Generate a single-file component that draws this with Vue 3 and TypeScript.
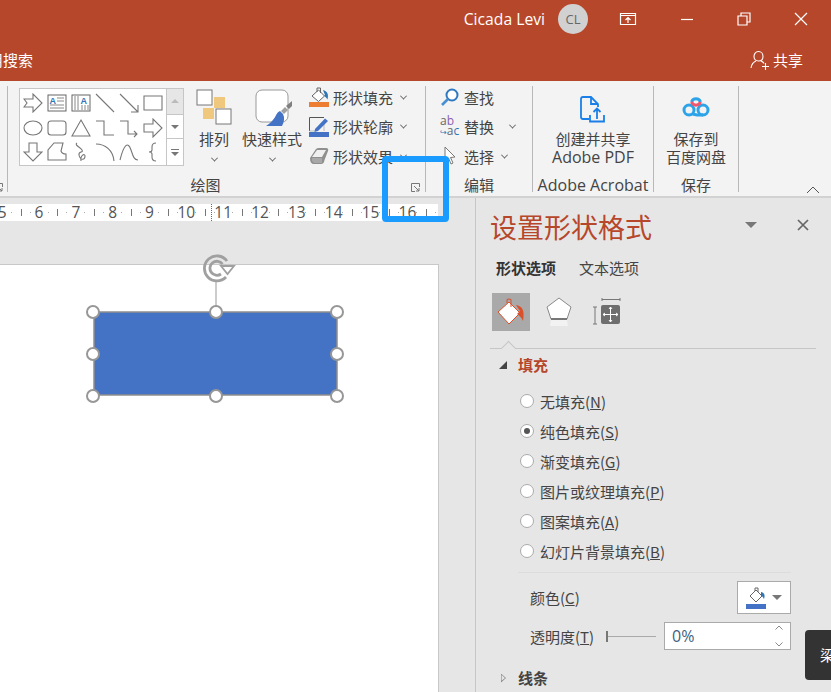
<script setup lang="ts">
const shapes: string[] = [
  'M1 6H10V1L19 10L10 19V14H1L4 10Z',
  '',
  '',
  'M1 1L19 19',
  'M1 1L19 19M19 12V19H12',
  'M1 3H19V17H1Z',
  'M1 10A9 7 0 1 0 19 10A9 7 0 1 0 1 10Z',
  'M4 3H16Q19 3 19 6V14Q19 17 16 17H4Q1 17 1 14V6Q1 3 4 3Z',
  'M10 2L19 18H1Z',
  'M1 3H9V17H19',
  'M1 3H9V16H18M15 13L18 16L15 19',
  'M1 6H10V1L19 10L10 19V14H1Z',
  'M6 1H14V10H19L10 19L1 10H6Z',
  'M1 18V8L7 1H16L14 9Q15 12 19 12V18Z',
  'M6 1C3 3 9 5 11 8C13 11 7 9 8 13C9 18 14 19 14 14C14 11 9 13 10 19',
  'M1 2C10 2 18 8 19 19',
  'M1 18C5 2 9 -1 12 8C14 14 15 18 19 18',
  'M13 1Q9 1 9 5V8Q9 10 6 10Q9 10 9 12V15Q9 19 13 19',
]

const fillOptions = [
  { label: '无填充', key: 'N', on: false },
  { label: '纯色填充', key: 'S', on: true },
  { label: '渐变填充', key: 'G', on: false },
  { label: '图片或纹理填充', key: 'P', on: false },
  { label: '图案填充', key: 'A', on: false },
  { label: '幻灯片背景填充', key: 'B', on: false },
]

const rulerMarks = ['5', '6', '7', '8', '9', '10', '11', '12', '13', '14', '15', '16', '']

const handles: [number, number][] = [
  [93, 312], [216, 312], [337, 312],
  [93, 354], [337, 354],
  [93, 396], [216, 396], [337, 396],
]
</script>

<template>
  <div class="app">
    <header class="titlebar">
      <span class="user">Cicada Levi</span>
      <span class="avatar">CL</span>
      <svg class="win ribbon-opts" width="18" height="14" viewBox="0 0 18 14">
        <path d="M1.5 1.5H16.5V12.5H1.5ZM1.5 3.5H16.5M9 11V6M6.5 8L9 5.5L11.5 8" fill="none" stroke="#fff" stroke-width="1.2" />
      </svg>
      <svg class="win minimize" width="14" height="14" viewBox="0 0 14 14">
        <path d="M1 7.5H13" stroke="#fff" stroke-width="1.2" />
      </svg>
      <svg class="win restore" width="14" height="14" viewBox="0 0 14 14">
        <path d="M1 4H10V13H1ZM4 4V1H13V10H10" fill="none" stroke="#fff" stroke-width="1.2" />
      </svg>
      <svg class="win close" width="14" height="14" viewBox="0 0 14 14">
        <path d="M1 1L13 13M13 1L1 13" stroke="#fff" stroke-width="1.2" />
      </svg>
    </header>

    <div class="tabbar">
      <span class="search">用搜索</span>
      <span class="share">
        <svg width="22" height="20" viewBox="0 0 22 20">
          <path d="M8.5 1.5C11.5 1.5 13 4 13 6.5C13 9 11.5 11 8.5 11C5.5 11 4 9 4 6.5C4 4 5.5 1.5 8.5 1.5ZM1 18C1.5 14.5 3.5 12 6 11M11 11C12.5 11.6 13.5 12.5 14 13.5M15.5 13V20M12 16.5H19" fill="none" stroke="#fff" stroke-width="1.1" />
        </svg>
        共享
      </span>
    </div>

    <section class="ribbon">
      <div class="group sliver">
        <svg class="launcher" width="9" height="9" viewBox="0 0 9 9">
          <path d="M8.5 4V.5H.5V8.5H4M3 3L8 8M8 5V8H5" fill="none" stroke="#777" />
        </svg>
      </div>

      <div class="group draw">
        <div class="group-body draw-body">
          <div class="gallery">
            <div class="gallery-grid">
              <span v-for="(d, i) in shapes" :key="i" class="cell">
                <svg v-if="i === 1" width="20" height="20" viewBox="0 0 20 20">
                  <rect x="1" y="2" width="18" height="16" fill="#fff" stroke="#666" />
                  <text x="2.5" y="10.5" class="mini-a">A</text>
                  <path d="M10 5H17M10 8H17M3 12H17M3 15H17" stroke="#888" />
                </svg>
                <svg v-else-if="i === 2" width="20" height="20" viewBox="0 0 20 20">
                  <rect x="1" y="2" width="18" height="16" fill="#fff" stroke="#666" />
                  <text x="9.5" y="11" class="mini-a">A</text>
                  <path d="M4 3V17M7 3V17M11 12V17M14 12V17M17 12V17" stroke="#888" />
                </svg>
                <svg v-else width="20" height="20" viewBox="0 0 20 20">
                  <path :d="d" fill="none" stroke="#777" stroke-width="1.1" />
                </svg>
              </span>
            </div>
            <div class="gallery-scroll">
              <span class="scroll-btn first"><i class="tri up"></i></span>
              <span class="scroll-btn"><i class="tri"></i></span>
              <span class="scroll-btn last"><i class="bar"></i><i class="tri"></i></span>
            </div>
          </div>

          <div class="big-btn arrange">
            <svg width="36" height="36" viewBox="0 0 36 36">
              <rect x="18" y="8" width="11" height="11" fill="#efc77d" />
              <rect x="7" y="19" width="11" height="11" fill="#efc77d" />
              <rect x="1" y="1" width="15" height="15" fill="#fff" stroke="#777" />
              <rect x="20" y="20" width="15" height="15" fill="#fff" stroke="#777" />
            </svg>
            <span class="big-label">排列</span>
            <i class="chev"></i>
          </div>

          <div class="big-btn quick">
            <svg class="quick-icon" width="38" height="38" viewBox="0 0 38 38">
              <rect x="1" y="1" width="32" height="32" rx="6" fill="#fff" stroke="#999" />
              <path d="M37 12L31 17L34 20L37 17Z" fill="#7f7f7f" />
              <path d="M30 18L26 22L29 25L33 21Z" fill="#a0a0a0" />
              <path d="M25 22C20 24 22 30 11 37H27C29 33 30 29 28 25Z" fill="#4472c4" />
            </svg>
            <span class="big-label">快速样式</span>
            <i class="chev"></i>
          </div>

          <div class="format-list">
            <div class="format-row">
              <svg width="20" height="20" viewBox="0 0 20 20">
                <path d="M3 9L9.500 3L15.500 9L9.500 14.500Z" fill="#fff" stroke="#666" />
                <path d="M8 5V1H11.500V6" fill="none" stroke="#666" />
                <path d="M14 3C18 4 20 7 18.500 12.500C17.500 10.500 16 9.500 15 9L16 8Z" fill="#2e75b6" />
                <rect y="15" width="20" height="5" fill="#ed7d31" />
              </svg>
              <span>形状填充</span><i class="chev"></i>
            </div>
            <div class="format-row">
              <svg width="20" height="20" viewBox="0 0 20 20">
                <path d="M.5 14V.5H15" fill="none" stroke="#555" />
                <path d="M.5 14H6M15 7V14" fill="none" stroke="#bbb" />
                <path d="M6 12L16 1.5L19 4L9 14L5.5 15Z" fill="#4472c4" />
                <rect y="15" width="20" height="5" fill="#4472c4" />
              </svg>
              <span>形状轮廓</span><i class="chev"></i>
            </div>
            <div class="format-row">
              <svg width="20" height="20" viewBox="0 0 20 20">
                <path d="M1 12L7 3Q8 2 10 2H17Q20 2 19 5L15.500 14Q15 18 12 18H5Q1 18 1 12Z" fill="#8f8f8f" />
                <path d="M3 11L8 4H17L13 11Z" fill="#efefef" />
                <path d="M3 15L3 12H13L13 17H5Z" fill="#a8a8a8" />
              </svg>
              <span>形状效果</span><i class="chev"></i>
            </div>
          </div>
        </div>
        <div class="group-label">绘图</div>
        <svg class="launcher" width="9" height="9" viewBox="0 0 9 9">
          <path d="M8.5 4V.5H.5V8.5H4M3 3L8 8M8 5V8H5" fill="none" stroke="#777" />
        </svg>
      </div>

      <div class="group edit">
        <div class="group-body edit-body">
          <div class="edit-row">
            <svg width="20" height="20" viewBox="0 0 20 20">
              <circle cx="12" cy="8" r="5.500" fill="#fff" stroke="#2f78bf" stroke-width="2" />
              <path d="M8 12L2 18" stroke="#4a90d0" stroke-width="2.600" />
            </svg>
            <span>查找</span>
          </div>
          <div class="edit-row">
            <span class="abac"><b>a<em>b</em></b><b><em class="hook">↪</em>a<em class="c">c</em></b></span>
            <span>替换</span><i class="chev wide"></i>
          </div>
          <div class="edit-row">
            <svg width="20" height="20" viewBox="0 0 20 20">
              <path d="M5 1V15L8.500 12L11 18L13 17L10.500 11.500L15 11Z" fill="#fff" stroke="#777" />
            </svg>
            <span>选择</span><i class="chev"></i>
          </div>
        </div>
        <div class="group-label">编辑</div>
      </div>

      <div class="group acrobat">
        <div class="group-body stacked">
          <svg class="stack-icon" width="26" height="28" viewBox="0 0 26 28">
            <path d="M9 23H3Q1 23 1 21V3Q1 1 3 1H11L18 8V11M11 1V8H18" fill="none" stroke="#1a7fe8" stroke-width="1.800" />
            <path d="M17 23V13M13.500 16L17 12.500L20.500 16M10 19V25.500H24V19" fill="none" stroke="#1a7fe8" stroke-width="1.800" />
          </svg>
          <span>创建并共享</span>
          <span>Adobe PDF</span>
        </div>
        <div class="group-label latin">Adobe Acrobat</div>
      </div>

      <div class="group baidu">
        <div class="group-body stacked">
          <svg class="stack-icon" width="28" height="28" viewBox="0 0 28 28">
            <circle cx="7" cy="14" r="5" fill="none" stroke="#2da3e8" stroke-width="3" />
            <circle cx="21" cy="14" r="5" fill="none" stroke="#2da3e8" stroke-width="3" />
            <path d="M10.500 18L15 19H21" fill="none" stroke="#2da3e8" stroke-width="3" />
            <path d="M9.500 6A4.800 4.800 0 0 1 18.500 6" fill="none" stroke="#2da3e8" stroke-width="3" />
            <path d="M9.500 6A4.800 4.800 0 0 0 18.500 6" fill="none" stroke="#f0566c" stroke-width="3" />
          </svg>
          <span>保存到</span>
          <span>百度网盘</span>
        </div>
        <div class="group-label">保存</div>
      </div>

      <svg class="collapse" width="14" height="8" viewBox="0 0 14 8">
        <path d="M1 7L7 1L13 7" fill="none" stroke="#555" />
      </svg>
    </section>

    <main class="main">
      <div class="canvas">
        <div class="ruler">
          <span v-for="(m, i) in rulerMarks" :key="i" class="mark">{{ m }}</span>
          <i class="ruler-cursor"></i>
        </div>
        <div class="slide">
          <svg class="selection" width="290" height="160" viewBox="70 250 290 160">
            <rect x="94" y="312" width="243" height="83" fill="#4472c4" stroke="#8e8e8e" stroke-width="1.500" />
            <path d="M216 281V306" stroke="#999" />
            <circle
              v-for="(h, i) in handles"
              :key="i"
              :cx="h[0]"
              :cy="h[1]"
              r="6"
              fill="#fff"
              stroke="#979797"
              stroke-width="2"
            />
            <path
              d="M227 261A12.500 12.500 0 1 0 226 277M222.500 264A7 7 0 1 0 221 274"
              fill="none"
              stroke="#a0a0a0"
              stroke-width="2.800"
            />
            <path d="M221 266H234L227.500 274Z" fill="#fff" stroke="#a0a0a0" stroke-width="1.800" />
          </svg>
        </div>
      </div>

      <aside class="panel">
        <div class="panel-head">
          <h1>设置形状格式</h1>
          <i class="drop"></i>
          <svg width="12" height="12" viewBox="0 0 12 12">
            <path d="M1 1L11 11M11 1L1 11" stroke="#666" stroke-width="1.700" />
          </svg>
        </div>
        <div class="panel-tabs">
          <span class="active">形状选项</span>
          <span>文本选项</span>
        </div>
        <div class="panel-icons">
          <span class="tool selected">
            <svg width="28" height="28" viewBox="0 0 28 28">
              <path d="M1 14L12 4L23 15L12 26Z" fill="#fff" stroke="#d9502c" />
              <path d="M10 5V1.500Q12 .5 14 1.500V9" fill="none" stroke="#d9502c" />
              <path d="M19 7C25 8 28 12 26 23C24 19 22 17 20 16L23 13Z" fill="#d9502c" />
            </svg>
          </span>
          <span class="tool">
            <svg width="26" height="30" viewBox="0 0 26 30">
              <path d="M13 1L25 10L21 22H5L1 10Z" fill="#fff" stroke="#8a8a8a" />
              <path d="M5 22H21" stroke="#777" stroke-width="2" />
              <path d="M4 29L5 23H21L22 29Z" fill="#f2f2f2" />
            </svg>
          </span>
          <span class="tool">
            <svg width="30" height="28" viewBox="0 0 30 28">
              <path d="M10 1.500H28M10 0V3M28 0V3M1 9H5M3 9V26M1 26H5" fill="none" stroke="#777" />
              <rect x="9" y="7" width="19" height="19" rx="2" fill="#6e6e6e" />
              <path d="M18.500 9V24M11 16.500H26" stroke="#fff" />
              <path d="M17 11L18.500 9L20 11M17 22L18.500 24L20 22M13 15L11 16.500L13 18M24 15L26 16.500L24 18" fill="none" stroke="#fff" />
            </svg>
          </span>
        </div>
        <div class="panel-rule"><i class="notch"></i></div>

        <div class="section-head open">
          <i class="solid-tri"></i>
          <span>填充</span>
        </div>

        <label v-for="o in fillOptions" :key="o.key" class="radio-row">
          <i class="radio" :class="{ on: o.on }"></i>
          <span>{{ o.label }}(<u>{{ o.key }}</u>)</span>
        </label>

        <div class="fill-rule"></div>

        <div class="prop-row color-row">
          <span>颜色(<u>C</u>)</span>
          <span class="color-btn">
            <svg width="20" height="22" viewBox="0 0 20 22">
              <path d="M4 9L10 3L16 9L10 15Z" fill="#fff" stroke="#666" />
              <path d="M9 4V1H12V5" fill="none" stroke="#666" />
              <path d="M15 5C19 6 19 9 18 12C17 10 16 9 15 8Z" fill="#2e75b6" />
              <rect y="17" width="20" height="5" fill="#4472c4" />
            </svg>
            <i class="drop small"></i>
          </span>
        </div>

        <div class="prop-row alpha-row">
          <span>透明度(<u>T</u>)</span>
          <span class="slider"><i></i></span>
          <span class="spin">
            <span>0%</span>
            <svg width="8" height="22" viewBox="0 0 8 22">
              <path d="M.5 4.500L4 1L7.500 4.500M.5 17.500L4 21L7.500 17.500" fill="none" stroke="#888" />
            </svg>
          </span>
        </div>

        <div class="section-head closed">
          <i class="hollow-tri"></i>
          <span>线条</span>
        </div>
      </aside>
    </main>

    <div class="toast">梁</div>
    <div class="callout"></div>
  </div>
</template>

<style>
html,
body {
  margin: 0;
  background: #e6e6e6;
}
</style>

<style scoped>
.app {
  position: relative;
  display: flex;
  flex-direction: column;
  width: 831px;
  height: 692px;
  overflow: hidden;
  background: #e6e6e6;
  color: #444;
  font-family: "Noto Sans CJK SC", "Open Sans", sans-serif;
  font-size: 15px;
}

.titlebar {
  display: flex;
  align-items: center;
  height: 38px;
  padding-right: 23px;
  justify-content: flex-end;
  background: #b7472a;
  color: #fff;
}

.user {
  font-family: "Open Sans", sans-serif;
  font-size: 15.700px;
  margin-right: 13px;
}

.avatar {
  display: flex;
  align-items: center;
  justify-content: center;
  width: 30px;
  height: 30px;
  border-radius: 50%;
  background: #d1d1d1;
  color: #666;
  font-family: "Open Sans", sans-serif;
  font-size: 13px;
}

.win {
  flex: none;
}

.ribbon-opts {
  margin-left: 31px;
}

.minimize {
  margin-left: 43px;
}

.restore {
  margin-left: 43px;
}

.close {
  margin-left: 43px;
}

.tabbar {
  display: flex;
  justify-content: space-between;
  align-items: center;
  height: 43px;
  padding-right: 28px;
  background: #b7472a;
  color: #fff;
}

.search {
  margin-left: -12px;
}

.share {
  display: flex;
  align-items: center;
  gap: 1px;
}

.ribbon {
  position: relative;
  display: flex;
  flex: none;
  box-sizing: border-box;
  height: 117px;
  padding: 5px 0 4px;
  background: #f3f3f3;
  border-bottom: 2px solid #d2d2d2;
}

.group {
  position: relative;
  display: flex;
  flex: none;
  flex-direction: column;
  box-sizing: border-box;
  height: 106px;
  border-right: 1px solid #b8b8b8;
}

.group-body {
  flex: none;
  height: 86px;
}

.group-label {
  flex: none;
  text-align: center;
  line-height: 20px;
  margin-top: 3px;
}

.draw .group-label {
  padding-right: 22px;
}

.group-label.latin {
  font-family: "Open Sans", sans-serif;
  font-size: 16px;
  white-space: nowrap;
}

.sliver {
  width: 8px;
  overflow: hidden;
}

.sliver .launcher {
  left: -6px;
}

.draw {
  width: 418px;
}

.edit {
  width: 107px;
}

.acrobat {
  width: 121px;
}

.baidu {
  width: 85px;
}

.draw-body {
  display: flex;
  padding: 2px 0 0 11px;
  box-sizing: border-box;
}

.gallery {
  display: flex;
  width: 165px;
  height: 78px;
  box-sizing: border-box;
  background: #fff;
  border: 1px solid #c6c6c6;
}

.gallery-grid {
  display: grid;
  grid-template-columns: repeat(6, 24px);
  grid-template-rows: repeat(3, 24.500px);
  padding: 2px 0 0 1px;
  width: 146px;
  box-sizing: border-box;
}

.cell {
  display: flex;
  align-items: center;
  justify-content: center;
}

.mini-a {
  fill: #2e75b6;
  font-family: "Liberation Sans", sans-serif;
  font-size: 9px;
  font-weight: 700;
}

.gallery-scroll {
  display: flex;
  flex-direction: column;
  flex: 1;
  border-left: 1px solid #c6c6c6;
}

.scroll-btn {
  display: flex;
  flex-direction: column;
  gap: 2px;
  align-items: center;
  justify-content: center;
  flex: 24;
}

.scroll-btn.first {
  flex: 26;
  background: #e6e6e6;
  border-bottom: 1px solid #c6c6c6;
}

.scroll-btn.last {
  flex: 27;
  border-top: 1px solid #c6c6c6;
}

.tri {
  width: 0;
  height: 0;
  border-left: 4px solid transparent;
  border-right: 4px solid transparent;
  border-top: 4px solid #777;
}

.tri.up {
  border-top: 0;
  border-bottom: 4px solid #bbb;
}

.bar {
  width: 8px;
  height: 1px;
  background: #777;
}

.big-btn {
  display: flex;
  flex-direction: column;
  align-items: center;
}

.arrange {
  width: 36px;
  margin-left: 12px;
  padding-top: 1px;
}

.quick {
  width: 60px;
  margin-left: 10px;
  padding-top: 1px;
}

.quick-icon {
  margin-left: 4px;
}

.big-label {
  margin-top: 3px;
  line-height: 22px;
  white-space: nowrap;
}

.quick .big-label {
  margin-top: 1px;
}

.big-btn .chev {
  margin: 7px 0 0;
}

.chev {
  display: inline-block;
  width: 4px;
  height: 4px;
  margin-left: 4px;
  border-right: 1px solid #666;
  border-bottom: 1px solid #666;
  transform: rotate(45deg) translate(-1px, -1px);
}

.chev.wide {
  margin-left: 12px;
}

.format-list {
  display: flex;
  flex-direction: column;
  gap: 9.500px;
  margin: -1px 0 0 7px;
}

.format-row {
  display: flex;
  align-items: center;
  height: 20px;
  gap: 4px;
  white-space: nowrap;
}

.launcher {
  position: absolute;
  left: 403px;
  top: 97px;
}

.edit-body {
  display: flex;
  flex-direction: column;
  gap: 9.500px;
  padding: 1px 0 0 14px;
  box-sizing: border-box;
}

.edit-row {
  display: flex;
  align-items: center;
  gap: 4px;
  height: 20px;
}

.abac {
  display: flex;
  flex-direction: column;
  width: 20px;
  font-family: "Open Sans", sans-serif;
  font-size: 12px;
  line-height: 9.500px;
  white-space: nowrap;
}

.abac b {
  font-weight: 400;
  color: #666;
}

.abac em {
  font-style: normal;
  color: #8a5fb0;
}

.abac .hook {
  font-family: "DejaVu Sans", sans-serif;
  font-size: 8px;
  color: #2e75b6;
}

.abac .c {
  color: #2e75b6;
}

.stacked {
  display: flex;
  flex-direction: column;
  align-items: center;
  line-height: 18px;
  white-space: nowrap;
}

.acrobat .stacked span:last-child {
  font-family: "Open Sans", sans-serif;
  font-size: 16px;
}

.stack-icon {
  margin: 10px 0 6px;
}

.collapse {
  position: absolute;
  right: 11px;
  top: 105px;
}

.main {
  display: flex;
  flex: 1;
  min-height: 0;
}

.canvas {
  position: relative;
  display: flex;
  flex-direction: column;
  flex: none;
  width: 475px;
}

.ruler {
  position: relative;
  display: flex;
  width: 438px;
  height: 17px;
  margin-top: 6px;
  overflow: hidden;
  background: #fff;
}

.mark {
  flex: none;
  width: 36.850px;
  text-align: center;
  font-family: "Open Sans", sans-serif;
  font-size: 15.500px;
  line-height: 17px;
  color: #555;
  background-image:
    linear-gradient(#777, #777),
    linear-gradient(#aaa, #aaa),
    linear-gradient(#aaa, #aaa);
  background-repeat: no-repeat;
  background-size: 1px 7px, 1px 1px, 1px 1px;
  background-position: 0 5px, 9px 8px, 27px 8px;
}

.mark:first-child {
  margin-left: -16.300px;
}

.ruler-cursor {
  position: absolute;
  left: 211px;
  top: 0;
  height: 17px;
  border-left: 1px dotted #c8452a;
}

.slide {
  position: relative;
  flex: 1;
  width: 439px;
  margin-top: 43px;
  box-sizing: border-box;
  background: #fff;
  border-top: 1px solid #c8c8c8;
  border-right: 1px solid #c8c8c8;
}

.selection {
  position: absolute;
  left: 70px;
  top: -15px;
}

.panel {
  flex: 1;
  box-sizing: border-box;
  padding-left: 14px;
  background: #e6e6e6;
  border-left: 1px solid #c6c6c6;
}

.panel-head {
  display: flex;
  align-items: center;
  height: 36px;
  margin-top: 11px;
}

.panel-head h1 {
  margin: 0;
  font-size: 27px;
  font-weight: 400;
  color: #b7472a;
  line-height: 36px;
}

.drop {
  width: 0;
  height: 0;
  margin-left: 93px;
  margin-bottom: 5px;
  border-left: 6px solid transparent;
  border-right: 6px solid transparent;
  border-top: 6px solid #777;
}

.drop.small {
  margin: 0;
  border-left-width: 5px;
  border-right-width: 5px;
  border-top-width: 5px;
}

.panel-head svg {
  margin-left: 40px;
  margin-bottom: 5px;
}

.panel-tabs {
  display: flex;
  gap: 23px;
  margin: 12px 0 0 6px;
  line-height: 22px;
}

.panel-tabs .active {
  font-weight: 700;
  color: #333;
}

.panel-icons {
  display: flex;
  align-items: center;
  margin: 14px 0 0 2px;
}

.tool {
  display: flex;
  align-items: center;
  justify-content: center;
  width: 38px;
  height: 38px;
  margin-right: 10px;
}

.tool.selected {
  background: #a9a9a9;
}

.panel-rule {
  position: relative;
  width: 326px;
  height: 1px;
  margin-top: 17px;
  background: #c6c6c6;
}

.notch {
  position: absolute;
  left: 13px;
  top: -5px;
  width: 10px;
  height: 10px;
  background: #e6e6e6;
  border-left: 1px solid #c6c6c6;
  border-top: 1px solid #c6c6c6;
  transform: rotate(45deg);
}

.section-head {
  display: flex;
  align-items: center;
  font-weight: 700;
  line-height: 22px;
}

.section-head.open {
  margin-top: 5px;
  color: #b7472a;
}

.section-head.closed {
  margin-top: 17px;
}

.solid-tri {
  width: 0;
  height: 0;
  margin: 0 11px 0 9px;
  border-left: 8px solid transparent;
  border-bottom: 8px solid #444;
}

.hollow-tri {
  width: 5px;
  height: 9px;
  margin: 0 12px 0 11px;
  background: #888;
  clip-path: polygon(0 0, 100% 50%, 0 100%, 0 85%, 80% 50%, 12% 15%, 12% 85%, 0 85%);
}

.radio-row {
  display: flex;
  align-items: center;
  gap: 6px;
  height: 30px;
  margin-left: 30px;
}

.radio-row:first-of-type {
  margin-top: 10px;
}

.radio {
  position: relative;
  box-sizing: border-box;
  width: 14px;
  height: 14px;
  border: 1px solid #ababab;
  border-radius: 50%;
  background: #fff;
}

.radio.on::after {
  content: "";
  position: absolute;
  left: 3px;
  top: 3px;
  width: 6px;
  height: 6px;
  border-radius: 50%;
  background: #555;
}

.fill-rule {
  width: 273px;
  height: 1px;
  margin: 6px 0 0 28px;
  background: #dcdcdc;
}

.prop-row {
  display: flex;
  align-items: center;
  margin-left: 40px;
}

.color-row {
  justify-content: space-between;
  width: 261px;
  margin-top: 8px;
}

.color-btn {
  display: flex;
  align-items: center;
  justify-content: center;
  gap: 6px;
  box-sizing: border-box;
  width: 54px;
  height: 33px;
  background: #fff;
  border: 1px solid #aaa;
}

.alpha-row {
  margin-top: 8px;
  height: 28px;
}

.alpha-row > span:first-child {
  width: 76px;
  white-space: nowrap;
}

.slider {
  position: relative;
  width: 50px;
  height: 1px;
  background: #aaa;
}

.slider i {
  position: absolute;
  left: 0;
  top: -5px;
  width: 2px;
  height: 11px;
  background: #777;
}

.spin {
  display: flex;
  align-items: center;
  justify-content: space-between;
  box-sizing: border-box;
  width: 127px;
  height: 28px;
  margin-left: 8px;
  padding: 0 7px 0 7px;
  background: #fff;
  border: 1px solid #aaa;
  color: #3d5f80;
  font-family: "Open Sans", sans-serif;
  font-size: 16px;
}

.toast {
  position: absolute;
  left: 805px;
  top: 630px;
  width: 60px;
  height: 50px;
  padding-left: 15px;
  box-sizing: border-box;
  border-radius: 4px;
  background: #333;
  color: #fff;
  line-height: 50px;
}

.callout {
  position: absolute;
  left: 382px;
  top: 156px;
  box-sizing: border-box;
  width: 67px;
  height: 66px;
  border: 6px solid #1a9bff;
  border-radius: 4px;
}
</style>
